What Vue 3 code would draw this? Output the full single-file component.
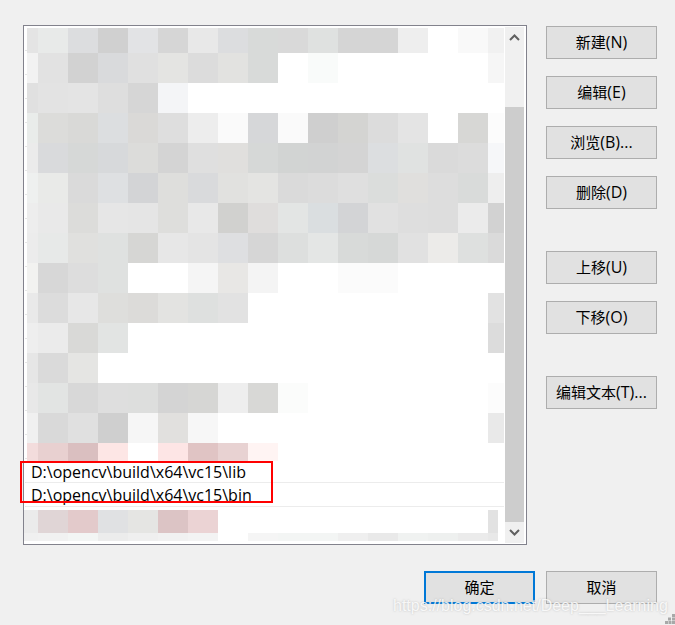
<script setup>
const W = '#ffffff'
const fill = (a, n = 17) => [...a, ...Array(n - a.length).fill(W)]
const topRows = [
  { h: 25, c: ['#e4e4e4','#e8eae9','#dcdddf','#d0d0d0','#e2e3e5','#d6d6d6','#e8e8e8','#dcdddf','#d8dad9','#d9d9d9','#dfe1e0','#d5d5d5','#d5d5d5','#eeeeee','#ffffff','#f9f9f9','#f1f1f1'] },
  { h: 30, c: ['#f2f2f2','#e2e2e2','#d2d2d2','#d9dadc','#e0e0e0','#e4e4e2','#dcdcdc','#e2e2e0','#d8dad9','#ffffff','#f9fbfa','#ffffff','#ffffff','#ffffff','#ffffff','#ffffff','#f6f6f6'] },
  { h: 30, c: fill(['#e0e0e0','#e3e3e3','#e4e4e4','#dedede','#d6d6d6','#f4f5f7']) },
  { h: 30, c: ['#e9ecea','#dcdcda','#d9d9d7','#dcdee0','#dad9d7','#dedede','#ededed','#fafafa','#d6d7d9','#fafafa','#cfcfcf','#d4d4d2','#dcdcdc','#e4e4e4','#ffffff','#d7d7d5','#fcfcfc'] },
  { h: 30, c: ['#ebebeb','#d9dadc','#d6d8d7','#d7d9db','#dcdcda','#d4d4d4','#dfdfdf','#e0dfdd','#d6d8d7','#d2d4d3','#d2d3d3','#d4d4d4','#dcdee0','#e0e2e1','#dadada','#dcdcdc','#f6f7f9'] },
  { h: 30, c: ['#eef0ef','#e9eae8','#dadada','#dee0e2','#d3d4d6','#dededc','#d9dadc','#e1e1df','#e4e4e2','#dadada','#dcdcdc','#dfdfdf','#dbdddc','#e0dfdd','#dddddd','#d9dbda','#eeeeee'] },
  { h: 30, c: ['#ededed','#e9e9e9','#dcdcda','#e6e6e6','#e5e5e5','#dededc','#e8e8e8','#d1d1cf','#dfdddc','#e3e5e4','#dadee0','#d3d4d6','#e1e1e1','#dedede','#dddddd','#ebebeb','#d2d2d2'] },
  { h: 30, c: ['#ececec','#e7e9e8','#e0e0de','#dfe1e0','#d6d6d4','#e7e7e7','#e4e4e4','#dedfe1','#d6d6d6','#dddfde','#e4e6e5','#d8dad9','#d6d8d7','#e1e1e1','#ecebe9','#dee0df','#dadada'] },
  { h: 30, c: fill(['#f2f2f0','#d7d7d7','#dddddd','#dfe1e0','#ffffff','#ffffff','#f5f5f5','#e8e7e5','#f4f4f4','#ffffff','#ffffff','#fbfbfb','#fbfbfb']) },
  { h: 30, c: [...fill(['#e9e9e9','#dcdcdc','#e7e7e7','#dededc','#dcdbd9','#e3e3e1','#dee0df','#e2e2e2'], 16), '#e2e2e2'] },
  { h: 30, c: [...fill(['#eeeeee','#ebebeb','#d9d9d7','#e2e4e3'], 16), '#dcdcdc'] },
  { h: 30, c: fill(['#e6e6e6','#dadada','#e5e5e3']) },
  { h: 30, c: [...fill(['#e8e8e8','#e2e4e3','#d8d8d8','#dedede','#dddedd','#d4d4d4','#d6d6d4','#eeeeee','#d8d8d6','#fbfcfb'], 16), '#fcfcfc'] },
  { h: 30, c: [...fill(['#f0f0f0','#d9d9d9','#e0e0e0','#cfcfcf','#f6f6f6','#e1e0de','#f7f7f7'], 16), '#e9e9e9'] },
  { h: 18, c: fill(['#f3dcdc','#e8d0d0','#dabfc0','#fde6e5','#ffffff','#fde5e5','#e0c4c4','#e8d2d2','#fff4f3']) }
]
const bottomRows = [
  { h: 23, c: [...fill(['#ebebeb','#e0d5d6','#e3cacb','#e0e1e3','#e5e5e3','#dcc4c5','#ebd3d4'], 16), '#e2e2e2'] },
  { h: 8, c: ['#f0f0f0','#f1f1f1','#f3f5f4','#ececec','#efefef','#f1f1f1','#f3f3f3','#ffffff','#f5f5f5','#f3f5f4','#f3f5f4','#efefef','#e9e9e9','#f0f2f1','#eef0ef','#ebebeb','#e8e8e8'] }
]
const flatten = rows => rows.flatMap((r, ri) => r.c.map((color, ci) => ({ key: `${ri}-${ci}`, color })))
const topTiles = flatten(topRows)
const bottomTiles = flatten(bottomRows)
const topHeights = topRows.map(r => r.h + 'px').join(' ')
const bottomHeights = bottomRows.map(r => r.h + 'px').join(' ')
const paths = ['D:\\opencv\\build\\x64\\vc15\\lib', 'D:\\opencv\\build\\x64\\vc15\\bin']
const groups = [
  { cls: 'g1', items: [['新建', '(N)'], ['编辑', '(E)'], ['浏览', '(B)...'], ['删除', '(D)']] },
  { cls: 'g2', items: [['上移', '(U)'], ['下移', '(O)']] },
  { cls: 'g3', items: [['编辑文本', '(T)...']] }
]
</script>

<template>
  <div class="dialog">
    <div class="main">
      <div class="list">
        <div class="content">
          <div class="mosaic" :style="{ gridTemplateRows: topHeights }">
            <i v-for="t in topTiles" :key="t.key" :style="{ background: t.color }"></i>
          </div>
          <div class="path first">{{ paths[0] }}</div>
          <div class="path">{{ paths[1] }}</div>
          <div class="mosaic lower" :style="{ gridTemplateRows: bottomHeights }">
            <i v-for="t in bottomTiles" :key="t.key" :style="{ background: t.color }"></i>
          </div>
          <div class="highlight"></div>
        </div>
        <div class="scrollbar">
          <div class="arrow">
            <svg width="11" height="7" viewBox="0 0 11 7"><path d="M1 6 L5.5 1.5 L10 6" fill="none" stroke="#606060" stroke-width="2"/></svg>
          </div>
          <div class="thumb"></div>
          <div class="arrow down">
            <svg width="11" height="7" viewBox="0 0 11 7"><path d="M1 1 L5.5 5.5 L10 1" fill="none" stroke="#606060" stroke-width="2"/></svg>
          </div>
        </div>
      </div>
      <div class="side">
        <div v-for="g in groups" :key="g.cls" class="group" :class="g.cls">
          <button v-for="b in g.items" :key="b[0]" class="btn labelled">{{ b[0] }}<span class="lat">{{ b[1] }}</span></button>
        </div>
      </div>
    </div>
    <div class="footer">
      <button class="btn primary">确定</button>
      <button class="btn">取消</button>
    </div>
    <div class="watermark">https://blog.csdn.net/Deep___Learning</div>
    <svg class="grip" width="10" height="10" viewBox="0 0 10 10">
      <g fill="#a8a8a8">
        <rect x="7" y="0" width="3" height="3"/>
        <rect x="3" y="3.5" width="3" height="3"/><rect x="7" y="3.5" width="3" height="3"/>
        <rect x="0" y="7" width="3" height="3"/><rect x="3.5" y="7" width="3" height="3"/><rect x="7" y="7" width="3" height="3"/>
      </g>
    </svg>
  </div>
</template>

<style scoped>
.dialog {
  position: relative;
  width: 675px;
  height: 625px;
  overflow: hidden;
  background: #f0f0f0;
  font-family: "Open Sans", "Noto Sans CJK SC", sans-serif;
  color: #000;
}
.main {
  display: flex;
  align-items: flex-start;
  gap: 19px;
  padding: 25px 0 0 23px;
}
.list {
  display: flex;
  box-sizing: border-box;
  width: 504px;
  height: 520px;
  border: 1px solid #82828c;
  background: #fff;
}
.content {
  position: relative;
  box-sizing: border-box;
  width: 481px;
  padding: 2px 1px 0 3px;
  background-image: repeating-linear-gradient(to bottom, transparent 0 23px, #e6e6e6 23px 24px);
  background-size: 2px 100%;
  background-position: 1px 1px;
  background-repeat: no-repeat;
}
.mosaic {
  display: grid;
  grid-template-columns: 11px repeat(15, 30px) 16px;
}
.mosaic.lower {
  grid-template-columns: 14px repeat(15, 30px) 10px;
  width: 464px;
  margin: 3px 0 0 -3px;
}
.path {
  box-sizing: border-box;
  height: 24px;
  margin-left: -1px;
  padding: 1px 0 0 5px;
  border-bottom: 1px solid #ececec;
  font-size: 16px;
  line-height: 22px;
  white-space: nowrap;
  overflow: hidden;
}
.path.first {
  height: 22px;
  line-height: 20px;
}
.highlight {
  position: absolute;
  left: -4px;
  top: 435px;
  box-sizing: border-box;
  width: 253px;
  height: 42px;
  border: 2px solid #f00;
}
.scrollbar {
  display: flex;
  flex-direction: column;
  width: 19px;
  margin: 1px 0;
  background: #f0f0f0;
}
.arrow {
  display: flex;
  justify-content: center;
  align-items: center;
  height: 20px;
}
.arrow.down {
  height: 21px;
}
.thumb {
  height: 415px;
  margin-top: 60px;
  background: #cdcdcd;
}
.side {
  display: flex;
  flex-direction: column;
  padding-top: 1px;
}
.group {
  display: flex;
  flex-direction: column;
  gap: 17px;
}
.g2,
.g3 {
  margin-top: 42px;
}
.btn {
  box-sizing: border-box;
  width: 111px;
  height: 33px;
  padding: 0;
  border: 1px solid #adadad;
  border-radius: 0;
  background: #e1e1e1;
  font-family: inherit;
  font-size: 15px;
  line-height: 1;
  color: #000;
}
.labelled {
  padding-bottom: 2px;
}
.lat {
  font-size: 16px;
}
.primary {
  border: 2px solid #0078d7;
}
.footer {
  display: flex;
  justify-content: flex-end;
  gap: 11px;
  padding: 26px 18px 0 0;
}
.watermark {
  position: absolute;
  left: 393px;
  top: 596px;
  font-family: "Liberation Sans", sans-serif;
  font-size: 16px;
  line-height: 20px;
  color: rgba(255, 255, 255, 0.85);
  text-shadow: 0 0 2px rgba(140, 140, 140, 0.5);
  white-space: nowrap;
}
.grip {
  position: absolute;
  right: 0;
  bottom: 1px;
}
</style>
